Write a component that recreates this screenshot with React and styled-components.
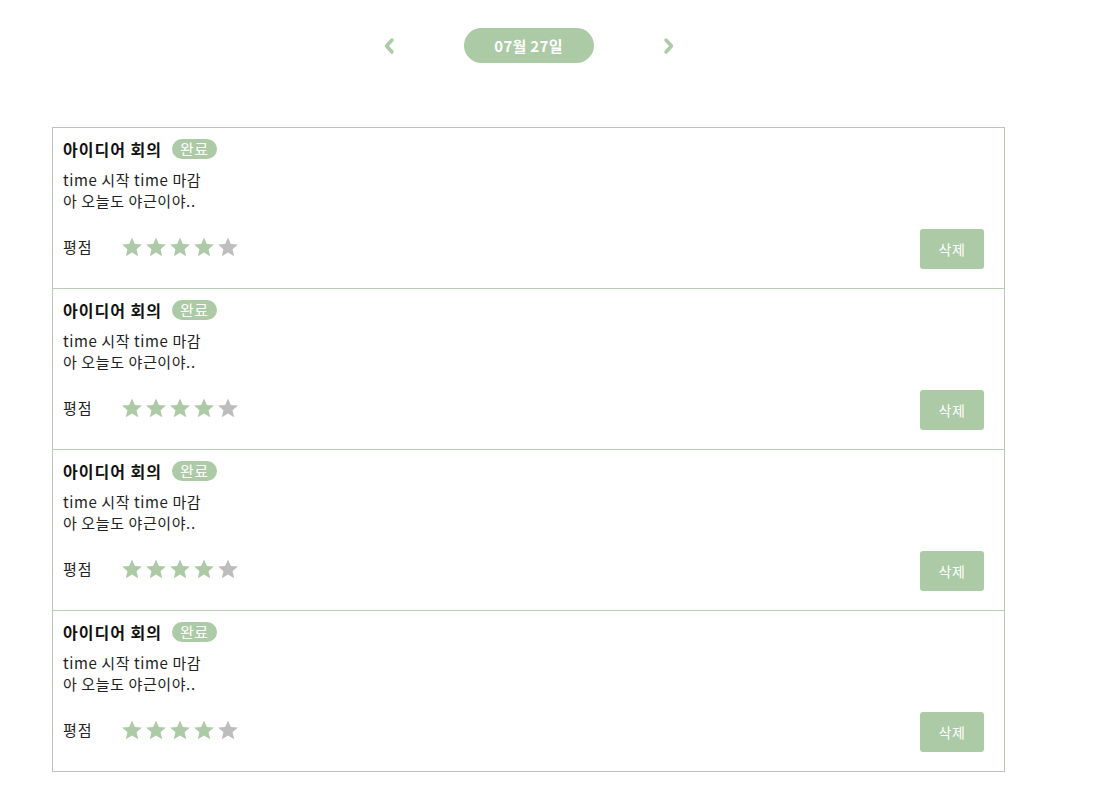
import React from "react";
import styled, { createGlobalStyle } from "styled-components";

const GREEN = "#abcaa5";

const Global = createGlobalStyle`
  body {
    margin: 8px;
    background: #fff;
    font-family: "Noto Sans CJK KR", "Noto Sans", sans-serif;
    color: #111;
  }
`;

const Page = styled.div`
  padding: 20px 0 0 44px;
  width: 953px;
`;

const DateBar = styled.div`
  display: flex;
  align-items: center;
  justify-content: center;
  gap: 68px;
  height: 35px;
  margin-bottom: 64px;
`;

const Arrow = styled.button`
  border: none;
  background: none;
  padding: 0;
  width: 14px;
  height: 20px;
  display: flex;
  align-items: center;
  justify-content: center;
  cursor: pointer;
`;

const DatePill = styled.div`
  width: 130px;
  height: 35px;
  border-radius: 18px;
  background: ${GREEN};
  color: #fff;
  font-weight: 700;
  font-size: 15px;
  letter-spacing: 0.3px;
  display: flex;
  align-items: center;
  justify-content: center;
`;

const List = styled.div`
  border: 1px solid #b9c8b6;
  border-bottom-color: #bcc2bb;
`;

const Card = styled.div`
  height: 130px;
  padding: 11px 20px 19px 10px;
  display: flex;
  flex-direction: column;
  & + & {
    border-top: 1px solid #b9cdb5;
  }
`;

const TitleRow = styled.div`
  display: flex;
  align-items: center;
  gap: 10px;
  height: 20px;
`;

const Title = styled.div`
  font-size: 16px;
  font-weight: 700;
  letter-spacing: 1px;
  color: #111;
  line-height: 20px;
`;

const Badge = styled.span`
  background: ${GREEN};
  color: #fff;
  font-size: 15px;
  letter-spacing: 0.5px;
  line-height: 20px;
  height: 20px;
  padding: 0 8px;
  border-radius: 10px;
`;

const Body = styled.div`
  margin-top: 10px;
  font-size: 15px;
  letter-spacing: 0.6px;
  line-height: 21px;
  color: #222;
`;

const BottomRow = styled.div`
  margin-top: auto;
  display: flex;
  align-items: center;
  justify-content: space-between;
  height: 40px;
`;

const Rating = styled.div`
  display: flex;
  align-items: center;
  gap: 28px;
`;

const Label = styled.span`
  font-size: 15px;
  letter-spacing: 1px;
  color: #222;
  margin-top: -5px;
`;

const Stars = styled.div`
  display: flex;
  gap: 2px;
  margin-top: -4px;
`;

const DeleteButton = styled.button`
  width: 64px;
  height: 40px;
  border: none;
  border-radius: 3px;
  background: ${GREEN};
  color: #fff;
  font-family: inherit;
  font-size: 14px;
  letter-spacing: 0.5px;
  cursor: pointer;
`;

const Star = ({ on }) => (
  <svg width="22" height="22" viewBox="0 0 24 24">
    <path
      d="M12 1.5l3.1 7.1 7.7.7-5.8 5.1 1.7 7.6L12 18l-6.7 4 1.7-7.6L1.2 9.3l7.7-.7z"
      fill={on ? GREEN : "#bdbdbd"}
    />
  </svg>
);

const Chevron = ({ dir }) => (
  <svg width="12" height="18" viewBox="0 0 12 18">
    <path
      d={dir === "left" ? "M9 3L3.5 9 9 15" : "M3 3l5.5 6L3 15"}
      fill="none"
      stroke={GREEN}
      strokeWidth="3.4"
      strokeLinecap="round"
      strokeLinejoin="round"
    />
  </svg>
);

const items = [0, 1, 2, 3];

export default function App() {
  return (
    <>
      <Global />
      <Page>
        <DateBar>
          <Arrow aria-label="prev">
            <Chevron dir="left" />
          </Arrow>
          <DatePill>07월 27일</DatePill>
          <Arrow aria-label="next">
            <Chevron dir="right" />
          </Arrow>
        </DateBar>
        <List>
          {items.map((i) => (
            <Card key={i}>
              <TitleRow>
                <Title>아이디어 회의</Title>
                <Badge>완료</Badge>
              </TitleRow>
              <Body>
                time 시작 time 마감
                <br />
                아 오늘도 야근이야..
              </Body>
              <BottomRow>
                <Rating>
                  <Label>평점</Label>
                  <Stars>
                    {[1, 2, 3, 4, 5].map((n) => (
                      <Star key={n} on={n <= 4} />
                    ))}
                  </Stars>
                </Rating>
                <DeleteButton>삭제</DeleteButton>
              </BottomRow>
            </Card>
          ))}
        </List>
      </Page>
    </>
  );
}
